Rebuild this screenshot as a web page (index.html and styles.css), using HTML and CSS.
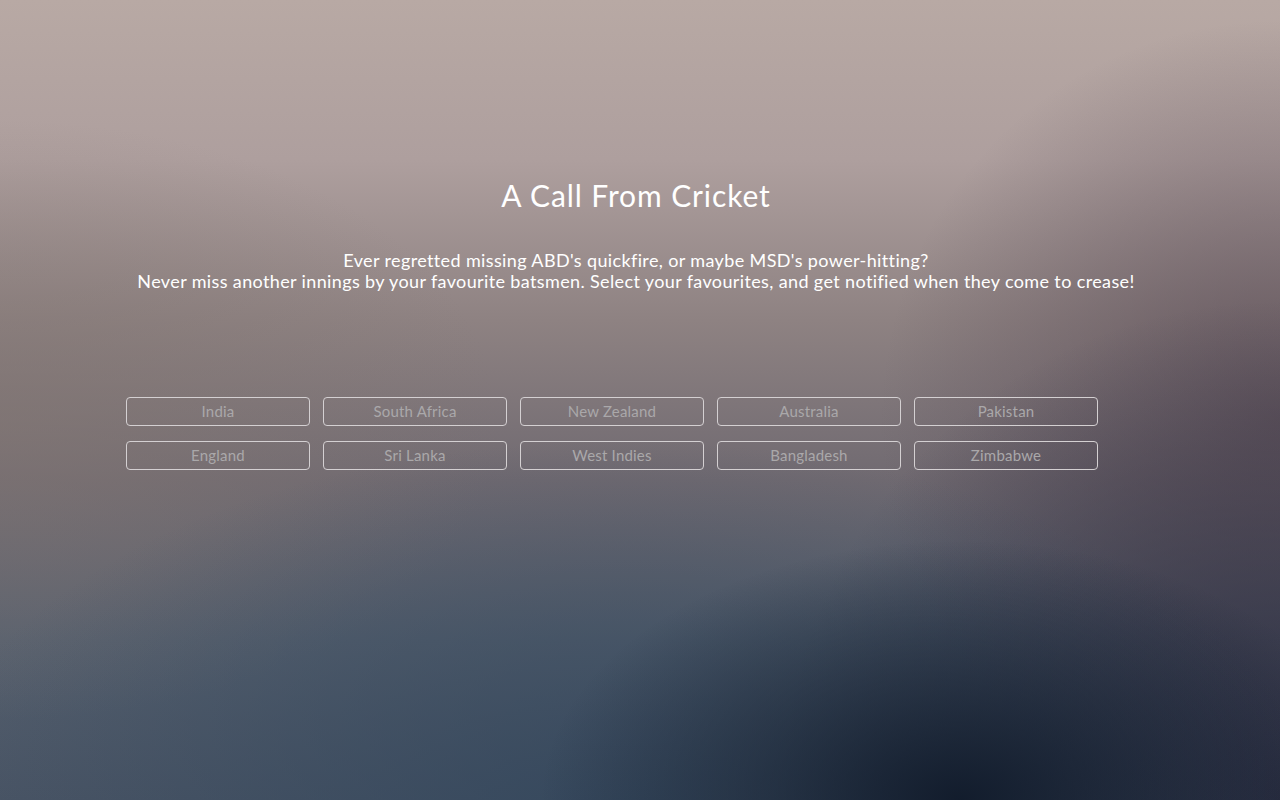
FILE: index.html
```html
<!DOCTYPE html>
<html lang="en">
<head>
<meta charset="utf-8">
<title>A Call From Cricket</title>
<link rel="stylesheet" href="styles.css">
</head>
<body>
<main class="page">
  <header class="hero">
    <h1 class="title">A Call From Cricket</h1>
    <p class="lead">Ever regretted missing ABD's quickfire, or maybe MSD's power-hitting?<br>Never miss another innings by your favourite batsmen. Select your favourites, and get notified when they come to crease!</p>
  </header>
  <section class="teams">
    <button class="team">India</button>
    <button class="team">South Africa</button>
    <button class="team">New Zealand</button>
    <button class="team">Australia</button>
    <button class="team">Pakistan</button>
    <button class="team">England</button>
    <button class="team">Sri Lanka</button>
    <button class="team">West Indies</button>
    <button class="team">Bangladesh</button>
    <button class="team">Zimbabwe</button>
  </section>
</main>
</body>
</html>
```

FILE: styles.css
```css
html, body {
  margin: 0;
  height: 100%;
}
body {
  font-family: Lato, "Open Sans", sans-serif;
  color: #fff;
  background-color: #6e6870;
  background-image:
    radial-gradient(ellipse 420px 260px at 960px 800px, rgba(16,26,42,0.95), rgba(16,26,42,0) 100%),
    radial-gradient(ellipse 700px 380px at 620px 820px, rgba(50,70,92,0.85), rgba(50,70,92,0) 100%),
    radial-gradient(ellipse 500px 500px at 1280px 800px, rgba(40,42,62,0.9), rgba(40,42,62,0) 100%),
    radial-gradient(ellipse 400px 400px at 1280px 420px, rgba(88,74,84,0.75), rgba(88,74,84,0) 100%),
    radial-gradient(ellipse 500px 300px at 0px 420px, rgba(130,118,114,0.6), rgba(130,118,114,0) 100%),
    linear-gradient(180deg, #b8a9a4 0%, #ae9f9e 20%, #8e8282 40%, #706a71 60%, #56606e 80%, #4a5565 100%);
  overflow: hidden;
}
.page {
  width: 1280px;
  height: 800px;
  box-sizing: border-box;
  padding-top: 177px;
}
.hero {
  text-align: center;
  padding-right: 8px;
}
.title {
  margin: 0;
  font-size: 30px;
  font-weight: 400;
  line-height: 36px;
  letter-spacing: 0.9px;
}
.lead {
  margin: 37px 0 0;
  font-size: 18px;
  line-height: 21px;
  letter-spacing: 0.37px;
}
.teams {
  margin: 105px 0 0 126px;
  display: grid;
  grid-template-columns: repeat(5, 184px);
  column-gap: 13px;
  row-gap: 15px;
}
.team {
  height: 29px;
  padding: 0;
  background: transparent;
  border: 1px solid #d4d0d2;
  border-radius: 4px;
  color: #aaa8aa;
  font-family: Lato, "Open Sans", sans-serif;
  font-size: 15px;
  line-height: 27px;
  letter-spacing: 0.2px;
}
```
